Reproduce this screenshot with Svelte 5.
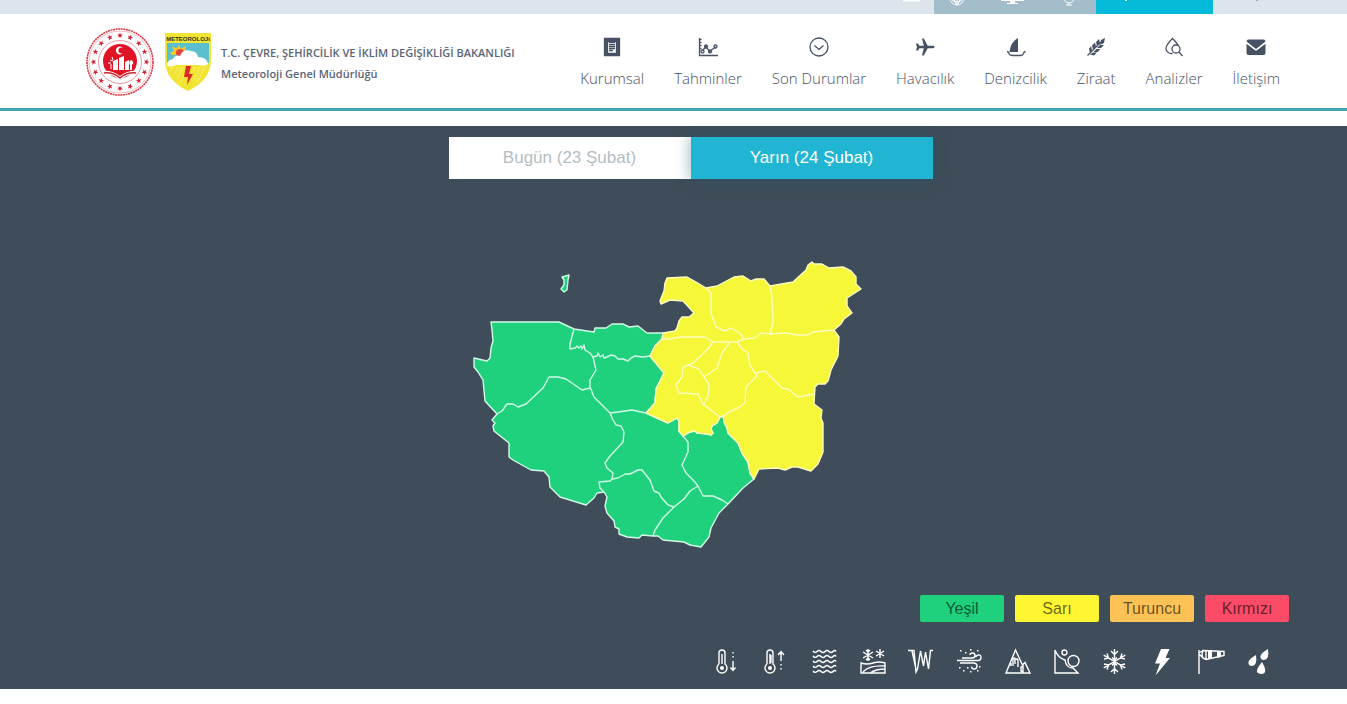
<script lang="ts">
  type Icon = { name: string; line?: string; fill?: string };

  const menu: Icon[] = [
    {
      name: 'Kurumsal',
      line: 'M2.500 1.500h15v17h-15zM5.500 4.500h9v12h-9zM7 7.500h6M7 9.500h6M7 11.500h6M7 13.500h4',
      fill: 'M2 1h16v18H2zM5 4v13h10V4h-2v2H7V4z',
    },
    {
      name: 'Tahminler',
      line: 'M1.500 1v17.500H20M1.500 2.500h2M1.500 5.500h2M1.500 8.500h2M1.500 11.500h2M4.500 13.500L8 9.500l3.500 5L17.500 10M3 14.500a1.500 1.500 0 1 0 3 0a1.500 1.500 0 1 0-3 0M6.500 9.500a1.500 1.500 0 1 0 3 0a1.500 1.500 0 1 0-3 0M10.500 14.500a1.500 1.500 0 1 0 3 0a1.500 1.500 0 1 0-3 0M16 9.500a1.500 1.500 0 1 0 3 0a1.500 1.500 0 1 0-3 0',
    },
    {
      name: 'Son Durumlar',
      line: 'M1 10a9 9 0 1 0 18 0a9 9 0 1 0-18 0M5.500 8.500L10 12.500l4.500-4',
    },
    {
      name: 'Havacılık',
      fill: 'M19.500 10c0 .8-1 1.300-2 1.300h-4.800L8.800 18.500H7l1.800-7.200H4.500L3 13.500H1L2 10 1 6.500h2l1.500 2.200h4.300L7 1.500h1.800l3.900 7.200h4.800c1 0 2 .5 2 1.300z',
    },
    {
      name: 'Denizcilik',
      line: 'M1 14.500q1.500 0 2 2t3 2h8.500q2.500 0 3-2t2-2',
      fill: 'M12 1v14H3.500Q4.500 5 12 1z',
    },
    {
      name: 'Ziraat',
      line: 'M1.500 18.500L15 5',
      fill: 'M19 1l-1 5-4 2 1-5zM13 2l1 4-3 3-1-4zM9 5.500l1 4-3 3-1-4zM5 9l1 4-2 3-1-4zM18 8l-4 0-3 3 4 0zM14.500 12l-4 0-3 3 4 0zM11 15.500l-4 0-3 2 4 1z',
    },
    {
      name: 'Analizler',
      line: 'M8.500 16.500C4.500 17 2 14 2 11.500 2 8 6 4 8.500 1.500c2 2 4.500 4.500 5.800 7M8 12a4 4 0 1 0 8 0a4 4 0 1 0-8 0M15 15l3.500 4',
    },
    {
      name: 'İletişim',
      fill: 'M2.500 2.500h15q2 0 2 2L10 12 .5 4.500q0-2 2-2zM.5 6.800l8.500 6.500q1 .6 2 0l8.500-6.500V16q0 2-2 2h-15q-2 0-2-2z',
    },
  ];

  const levels = [
    { name: 'Yeşil', key: 'green' },
    { name: 'Sarı', key: 'yellow' },
    { name: 'Turuncu', key: 'orange' },
    { name: 'Kırmızı', key: 'red' },
  ];

  const hazards: Icon[] = [
    {
      name: 'Soğuk',
      line: 'M4 15V4a3 3 0 0 1 6 0v11a5 5 0 1 1-6 0M7 5v10M18 12v9M15.500 18.500L18 21.500l2.500-3M18 3v1.500M18 7v1.500',
      fill: 'M5 19a2 2 0 1 0 4 0a2 2 0 1 0-4 0',
    },
    {
      name: 'Sıcak',
      line: 'M4 15V4a3 3 0 0 1 6 0v11a5 5 0 1 1-6 0M7 5v10M8 6v8M18 12V3M15 6l3-3.500L21 6M18 15v1.500M18 19v1.500',
      fill: 'M5 19a2 2 0 1 0 4 0a2 2 0 1 0-4 0',
    },
    {
      name: 'Sel',
      line: [2, 7, 12, 17, 22]
        .map((y) => `M1 ${y}q2 2.500 4 0.500t4 0 4 0 4 0 4 0 3 0`)
        .join(''),
    },
    {
      name: 'Kar ve don',
      line: 'M1 14q6 2 12 0t12 0v10H1zM3 23q6-7 22-6M10 24q6-4 15-4M8 0v12M3 3l10 6M13 3L3 9M6 1l2 2 2-2M6 11l2-2 2 2M20 0v9M16 2l8 5M24 2l-8 5',
    },
    {
      name: 'Buzlanma',
      line: 'M0 1.500h6L8 23l1.500-3L12.500 2l3 15 2-14 3 17 2-18.500H25M4 2l4 18',
    },
    {
      name: 'Toz fırtınası',
      line: 'M0 11.500h11M3 14h13q4 0 4 3t-3 3-2-2.500M5 9h10q3 0 3-2.500T15.500 4 13 6M8 11.500h13q3 0 3-3T21.500 6 19 8',
      fill: 'M3 1h1.500v1.500H3zM8 3h1.500v1.500H8zM13 0h1.500v1.500H13zM20 1h1.500v1.500H20zM2 18h1.500v1.500H2zM6 21h1.500v1.500H6zM10 18h1.500v1.500H10zM13 22h1.500v1.500H13zM22 17h1.500v1.500H22zM20 21h1.500v1.500H20z',
    },
    {
      name: 'Çığ',
      line: 'M1 24L10.500 1l7 15 2.500-2.500L25 24zM6 14v3M8 9v8M8 10q2-2 2 0v5M10 11q2-2 3 0v7M16 18v4l2 1v-6z',
    },
    {
      name: 'Heyelan',
      line: 'M1 1v23h23l-5-5q-7 0-8-8Q4 9 1 1M8 3.500a2.500 2.500 0 1 0 5 0a2.500 2.500 0 1 0-5 0M14 12a5.500 5.500 0 1 0 11 0a5.500 5.500 0 1 0-11 0',
    },
    {
      name: 'Kar',
      line: 'M12.500 0v25M1.700 6.200l21.600 12.600M23.300 6.200L1.700 18.800M9 2l3.500 3.500L16 2M9 23l3.500-3.500L16 23M2 10l4.500-1L5 4.500M23 15l-4.500 1 1.500 4.500M23 10l-4.500-1L20 4.500M2 15l4.500 1L5 20.500M10 8.500l2.500 2.500L15 8.500M10 16.500l2.500-2.500 2.500 2.500',
    },
    { name: 'Gök gürültülü sağanak', fill: 'M11 0h8.500l-4 9h4.500L5.500 26.500 10 14.500H5z' },
    {
      name: 'Rüzgar',
      line: 'M0 1v24M0 4l4-2.500M0 5l4 4M4 1.500l21 1v4L7 10.500Q1 9 4 1.500zM7 2v8M25 3v3',
      fill: 'M9 1.500h4v8l-4 1zM18 2h4v6l-4 1z',
    },
    {
      name: 'Yağmur',
      fill: 'M21 0q1.500 11-4 11-4 0-3.500-4Q14 4 21 0zM9 6q1.500 11-4 11-4 0-3.500-4Q2 10 9 6zM15 13q7 12-1 12-7-1-2-8z',
    },
  ];

  // outlines of the two warning zones, and the district borders inside them
  const greenZone =
    'M491 322L559 322 574 329 594 332 595 328 606 328 612 324 623 324 629 327 638 326 647 333 663 333 662 339 655 346 650 356 664 373 656 389 655 403 646 413 668 423 677 418 679 421 679 431 683 436 690 432 695 431 697 433 708 434 711 435 713 433 711 429 712 426 717 423 720 417 723 416 724 422 727 428 728 433 738 443 742 453 748 462 750 473 754 479 743 488 728 504 719 513 711 528 709 537 701 547 690 545 684 542 663 540 658 536 653 536 642 535 639 538 627 537 619 534 619 529 615 527 614 521 607 513 605 506 607 497 604 492 597 493 594 498 586 505 560 497 550 487 549 477 544 471 531 470 513 460 509 457 509 443 494 431 493 426 495 423 492 420 497 414 485 401 483 380 478 372 474 367 474 358 487 361 490 358 491 348 493 341 492 330z';
  const island = 'M562 277L569 275 568 280 567 290 564 292 561 289 564 285 564 280z';
  const greenBorders = [
    'M574 329L570 344 570 349 575 348 577 346 579 348 581 346 582 349 584 345 585 350 590 353 593 357 597 356 598 353 600 357 603 355 604 358 607 357 611 355 615 356 618 359 623 359 628 361 631 358 635 356 643 357 650 356',
    'M593 357L596 370 590 380 590 387 594 397 603 406 610 413 613 420 616 425 621 426 624 432 623 442 610 456 605 463 607 468 613 473 612 479 610 481 599 482 600 488 604 492',
    'M497 414L502 411 507 404 513 404 518 407 526 404 543 388 549 377 558 377 566 379 582 390 590 388',
    'M610 413L618 412 632 410 646 413',
    'M612 479L618 478 625 474 630 474 638 470 642 470 650 480 654 491 659 493 661 497 668 505 674 507',
    'M653 536L655 530 663 518 674 507 684 499 690 491 698 486',
    'M683 436L688 442 688 452 682 465 686 473 693 480 698 486 703 496 713 496 722 500 728 504',
  ];
  const yellowZone =
    'M663 333L675 331 677 328 679 321 682 317 689 317 694 313 683 301 670 300 661 304 660 301 664 291 665 283 667 278 687 277 696 282 706 288 717 286 734 277 743 276 751 281 756 279 764 279 770 286 793 282 806 270 808 265 812 262 814 264 822 264 829 268 843 267 851 271 856 277 856 284 861 289 847 298 847 306 852 313 844 319 841 324 834 330 839 337 838 356 831 370 828 381 825 384 818 384 815 387 814 404 822 410 821 418 823 423 823 452 818 464 811 471 798 467 792 467 785 470 778 468 759 469 754 479 750 473 748 462 742 453 738 443 728 433 727 428 724 422 723 416 720 417 717 423 712 426 711 429 713 433 711 435 708 434 697 433 695 431 690 432 683 436 679 431 679 421 677 418 668 423 646 413 655 403 656 389 664 373 650 356 655 346 662 339z';
  const yellowBorders = [
    'M706 288L711 293 711 313 716 327 725 331 731 328 740 333 744 339',
    'M770 286L772 297 773 322 770 334',
    'M662 339L670 339 680 337 705 337 713 342 737 342 744 339 755 338 761 333 770 334 787 333 797 335 808 335 813 332 834 330',
    'M713 342L708 349 693 363 683 367 682 377 676 385 679 393 698 394 703 404 720 417',
    'M688 365L699 369 704 377 709 384 708 397 703 405',
    'M704 377L717 368 722 353 730 342',
    'M737 342L742 349 748 353 750 365 757 376 746 387 745 403 738 408 727 413 723 417',
    'M756 373L765 371 773 379 782 388 788 389 798 397 814 394',
  ];

  const star = 'M0-3L.8-1 2.900-.9 1.200.4 1.800 2.400 0 1.200-1.800 2.400-1.200.4-2.900-.9-.8-1z';

  let day = $state(1);
  const days = ['Bugün (23 Şubat)', 'Yarın (24 Şubat)'];
</script>

<div class="topbar">
  <svg class="mark" viewBox="0 0 18 14"><path d="M0 0h17v1.500H0z" /></svg>
  <div class="tools">
    <a href="#globe" aria-label="Dil">
      <svg viewBox="0 0 20 14"><path class="stroke" d="M3-2a7 7 0 0 0 14 0M10-4v9M5 0q5 4 10 0M7-2q0 4 3 7 3-3 3-7" /></svg>
    </a>
    <a href="#screen" aria-label="Ekran">
      <svg viewBox="0 0 24 14"><path d="M0-4h23v5H0zM9 1h5v2h3v1H6V3h3z" /></svg>
    </a>
    <a href="#voice" aria-label="Ses">
      <svg viewBox="0 0 20 14"><path class="stroke" d="M5-2a5 5 0 0 0 10 0M10 3v2M7 5h6" /></svg>
    </a>
  </div>
  <div class="accent"><svg viewBox="0 0 60 14"><path d="M0 0h2v1H0z" /></svg></div>
  <div class="rest"><svg viewBox="0 0 50 14"><path d="M0 0h2v1H0z" /></svg></div>
</div>

<header>
  <a class="brand" href="#home">
    <svg class="emblem" viewBox="-34 -34 68 68">
      <circle r="33" fill="none" stroke="#d8303c" stroke-width="1.500" stroke-dasharray="2 .6" />
      <circle r="31" fill="none" stroke="#e9929a" stroke-width=".6" />
      <circle r="21.500" fill="none" stroke="#d9707a" stroke-width=".7" />
      {#each Array(16) as _, i}
        <path d={star} fill="#cf2532" transform="rotate({i * 22.5}) translate(0 -26.500)" />
      {/each}
      <circle r="17" cy="-1" fill="#df1525" />
      <path d="M3-14a4 4 0 1 0 0 5 3 3 0 1 1 0-5z" fill="#fff" />
      <path d="M-7 8V-1l5-2V8zM-1 8V-4l5-2V8zM5 8V0l4-2V8zM10 8V3q-2-3 1-5 4 2 1 5v5z" fill="#fff" />
      <path d="M-9 7V2M-10-2l3 1M-8-5l1 3M-12 1h3" stroke="#fff" />
      <path d="M-18 9Q-8 8 0 14 8 8 18 9L16 13Q7 12 0 18-7 12-16 13z" fill="#fff" />
      <path d="M-16 11Q-7 10 0 16 7 10 16 11" fill="none" stroke="#cf2532" stroke-width="1.500" />
    </svg>
    <svg class="badge" viewBox="0 0 48 60">
      <path d="M1 1h46v27q0 20-23 31Q1 48 1 28z" fill="#f2e433" />
      <path d="M3 11h42v20H3z" fill="#5bbfd0" />
      <path d="M15 13l2 4 5-3-1 5 5 1-4 3H8l-2-2 4-2-2-4 5 1z" fill="#f5c92e" />
      <circle cx="16" cy="21" r="4" fill="#e2463c" />
      <path d="M3 33q0-5 6-6 2-5 7-3 3-8 11-5 6 0 7 6 9 0 10 7-4 3-9 1H12q-7 3-9 0z" fill="#fff" />
      <path d="M8 35l-2 4M14 35l-4 8M19 35l-6 12M36 35l-6 12M41 35l-8 15M20 43l-4 8M31 35l-2 4" stroke="#fff59b" stroke-dasharray="2 1" />
      <path d="M22 34h5l-2 8h4l-6 11 1-8h-4z" fill="#dc2b23" />
      <text x="24" y="9">METEOROLOJi</text>
    </svg>
    <span class="titles">
      <span>T.C. ÇEVRE, ŞEHİRCİLİK VE İKLİM DEĞİŞİKLİĞİ BAKANLIĞI</span>
      <span>Meteoroloji Genel Müdürlüğü</span>
    </span>
  </a>
  <nav>
    {#each menu as item}
      <a href="#{item.name}">
        <svg viewBox="0 0 20 20">
          {#if item.fill}<path class="fill" fill-rule="evenodd" d={item.fill} />{/if}
          {#if item.line}<path class="stroke" d={item.line} />{/if}
        </svg>
        {item.name}
      </a>
    {/each}
  </nav>
</header>

<main>
  <div class="days">
    {#each days as label, i}
      <button class:active={day === i} onclick={() => (day = i)}>{label}</button>
    {/each}
  </div>

  <svg class="map" viewBox="470 258 441 294" role="img" aria-label="Uyarı haritası">
    <g class="zone green">
      <path d={island} />
      <path d={greenZone} />
      {#each greenBorders as d}<path class="border" {d} />{/each}
    </g>
    <g class="zone yellow">
      <path d={yellowZone} />
      {#each yellowBorders as d}<path class="border" {d} />{/each}
    </g>
  </svg>

  <div class="levels">
    {#each levels as level}
      <button class={level.key}>{level.name}</button>
    {/each}
  </div>

  <ul class="hazards">
    {#each hazards as hazard}
      <li>
        <svg viewBox="-1 -1 27 27" role="img" aria-label={hazard.name}>
          {#if hazard.fill}<path class="fill" d={hazard.fill} />{/if}
          {#if hazard.line}<path class="stroke" d={hazard.line} />{/if}
        </svg>
      </li>
    {/each}
  </ul>
</main>

<style>
  :global(body) {
    background: #fff;
    font-family: 'Open Sans', 'Noto Sans', sans-serif;
    color: #465164;
  }
  a {
    color: inherit;
    text-decoration: none;
  }
  button {
    border: none;
    padding: 0;
    cursor: pointer;
    font-family: 'Liberation Sans', Arial, sans-serif;
  }
  svg {
    display: block;
  }
  .fill {
    fill: currentColor;
  }
  .stroke {
    fill: none;
    stroke: currentColor;
  }

  .topbar {
    display: flex;
    justify-content: flex-end;
    height: 14px;
    overflow: hidden;
    background: #dbe5eb;
    color: #fff;

    svg {
      height: 14px;
      fill: #fff;
    }
    .mark {
      margin-right: 13px;
    }
    .tools {
      display: flex;
      justify-content: space-between;
      box-sizing: border-box;
      width: 162px;
      padding: 0 17px 0 13px;
      background: #a3bdca;
    }
    .accent {
      display: flex;
      justify-content: center;
      width: 117px;
      background: #04bad8;
    }
    .rest {
      box-sizing: border-box;
      width: 134px;
      padding-left: 43px;

      svg {
        fill: #9aabb6;
      }
    }
  }

  header {
    display: flex;
    align-items: center;
    justify-content: space-between;
    box-sizing: border-box;
    height: 97px;
    padding: 2px 67px 0 86px;
    border-bottom: 3px solid #3fa5b9;
  }

  .brand {
    display: flex;
    align-items: center;

    .emblem {
      width: 68px;
      height: 68px;
    }
    .badge {
      width: 48px;
      height: 60px;
      margin: 0 9px 0 10px;

      text {
        font: bold 6px 'Liberation Sans', sans-serif;
        text-anchor: middle;
        fill: #33341c;
      }
    }
    .titles {
      display: flex;
      flex-direction: column;
      margin-top: 2px;
      font-size: 11px;
      font-weight: 600;
      line-height: 21px;
      color: #5a6577;
      white-space: nowrap;
    }
  }

  nav {
    display: flex;
    gap: 30px;

    a {
      display: flex;
      flex-direction: column;
      align-items: center;
      gap: 11px;
      font-size: 15px;
      font-weight: 350;
      line-height: 20px;
      white-space: nowrap;
    }
    svg {
      width: 20px;
      height: 20px;
    }
    .stroke {
      stroke-width: 1.3;
    }
  }

  main {
    display: flex;
    flex-direction: column;
    margin-top: 15px;
    padding: 11px 58px 14px 92px;
    background: #3f4c59;
  }

  .days {
    display: flex;
    align-self: center;

    button {
      width: 242px;
      height: 42px;
      background: #fff;
      color: #b4bdc2;
      font-size: 17px;
    }
    .active {
      background: #20b5d3;
      box-shadow: 0 0 15px rgba(32, 90, 110, 0.5);
      color: #fff;
    }
  }

  .map {
    align-self: center;
    width: 441px;
    height: 294px;
    margin: 79px 0 43px;
  }
  .zone {
    stroke-linejoin: round;
    stroke-width: 1.4;

    .border {
      fill: none;
    }
  }
  .zone.green {
    fill: #1fd07d;
    stroke: #d2fbe7;
  }
  .zone.yellow {
    fill: #f6f739;
    stroke: #fdfdc0;
  }

  .levels {
    display: flex;
    justify-content: flex-end;
    gap: 11px;

    button {
      width: 84px;
      height: 27px;
      border-radius: 2px;
      font-size: 16px;
      color: rgba(0, 0, 0, 0.6);
    }
    .green {
      background: #1fd07d;
    }
    .yellow {
      background: #fff633;
    }
    .orange {
      background: #fdc255;
    }
    .red {
      background: #fb4b66;
    }
  }

  .hazards {
    display: grid;
    grid-template-columns: repeat(12, 1fr);
    align-self: flex-end;
    justify-items: center;
    width: 581px;
    margin: 26px 5px 0 0;
    padding: 0;
    list-style: none;
    color: #fff;

    svg {
      width: 27px;
      height: 27px;
    }
    .stroke {
      stroke-width: 1.4;
    }
  }
</style>
